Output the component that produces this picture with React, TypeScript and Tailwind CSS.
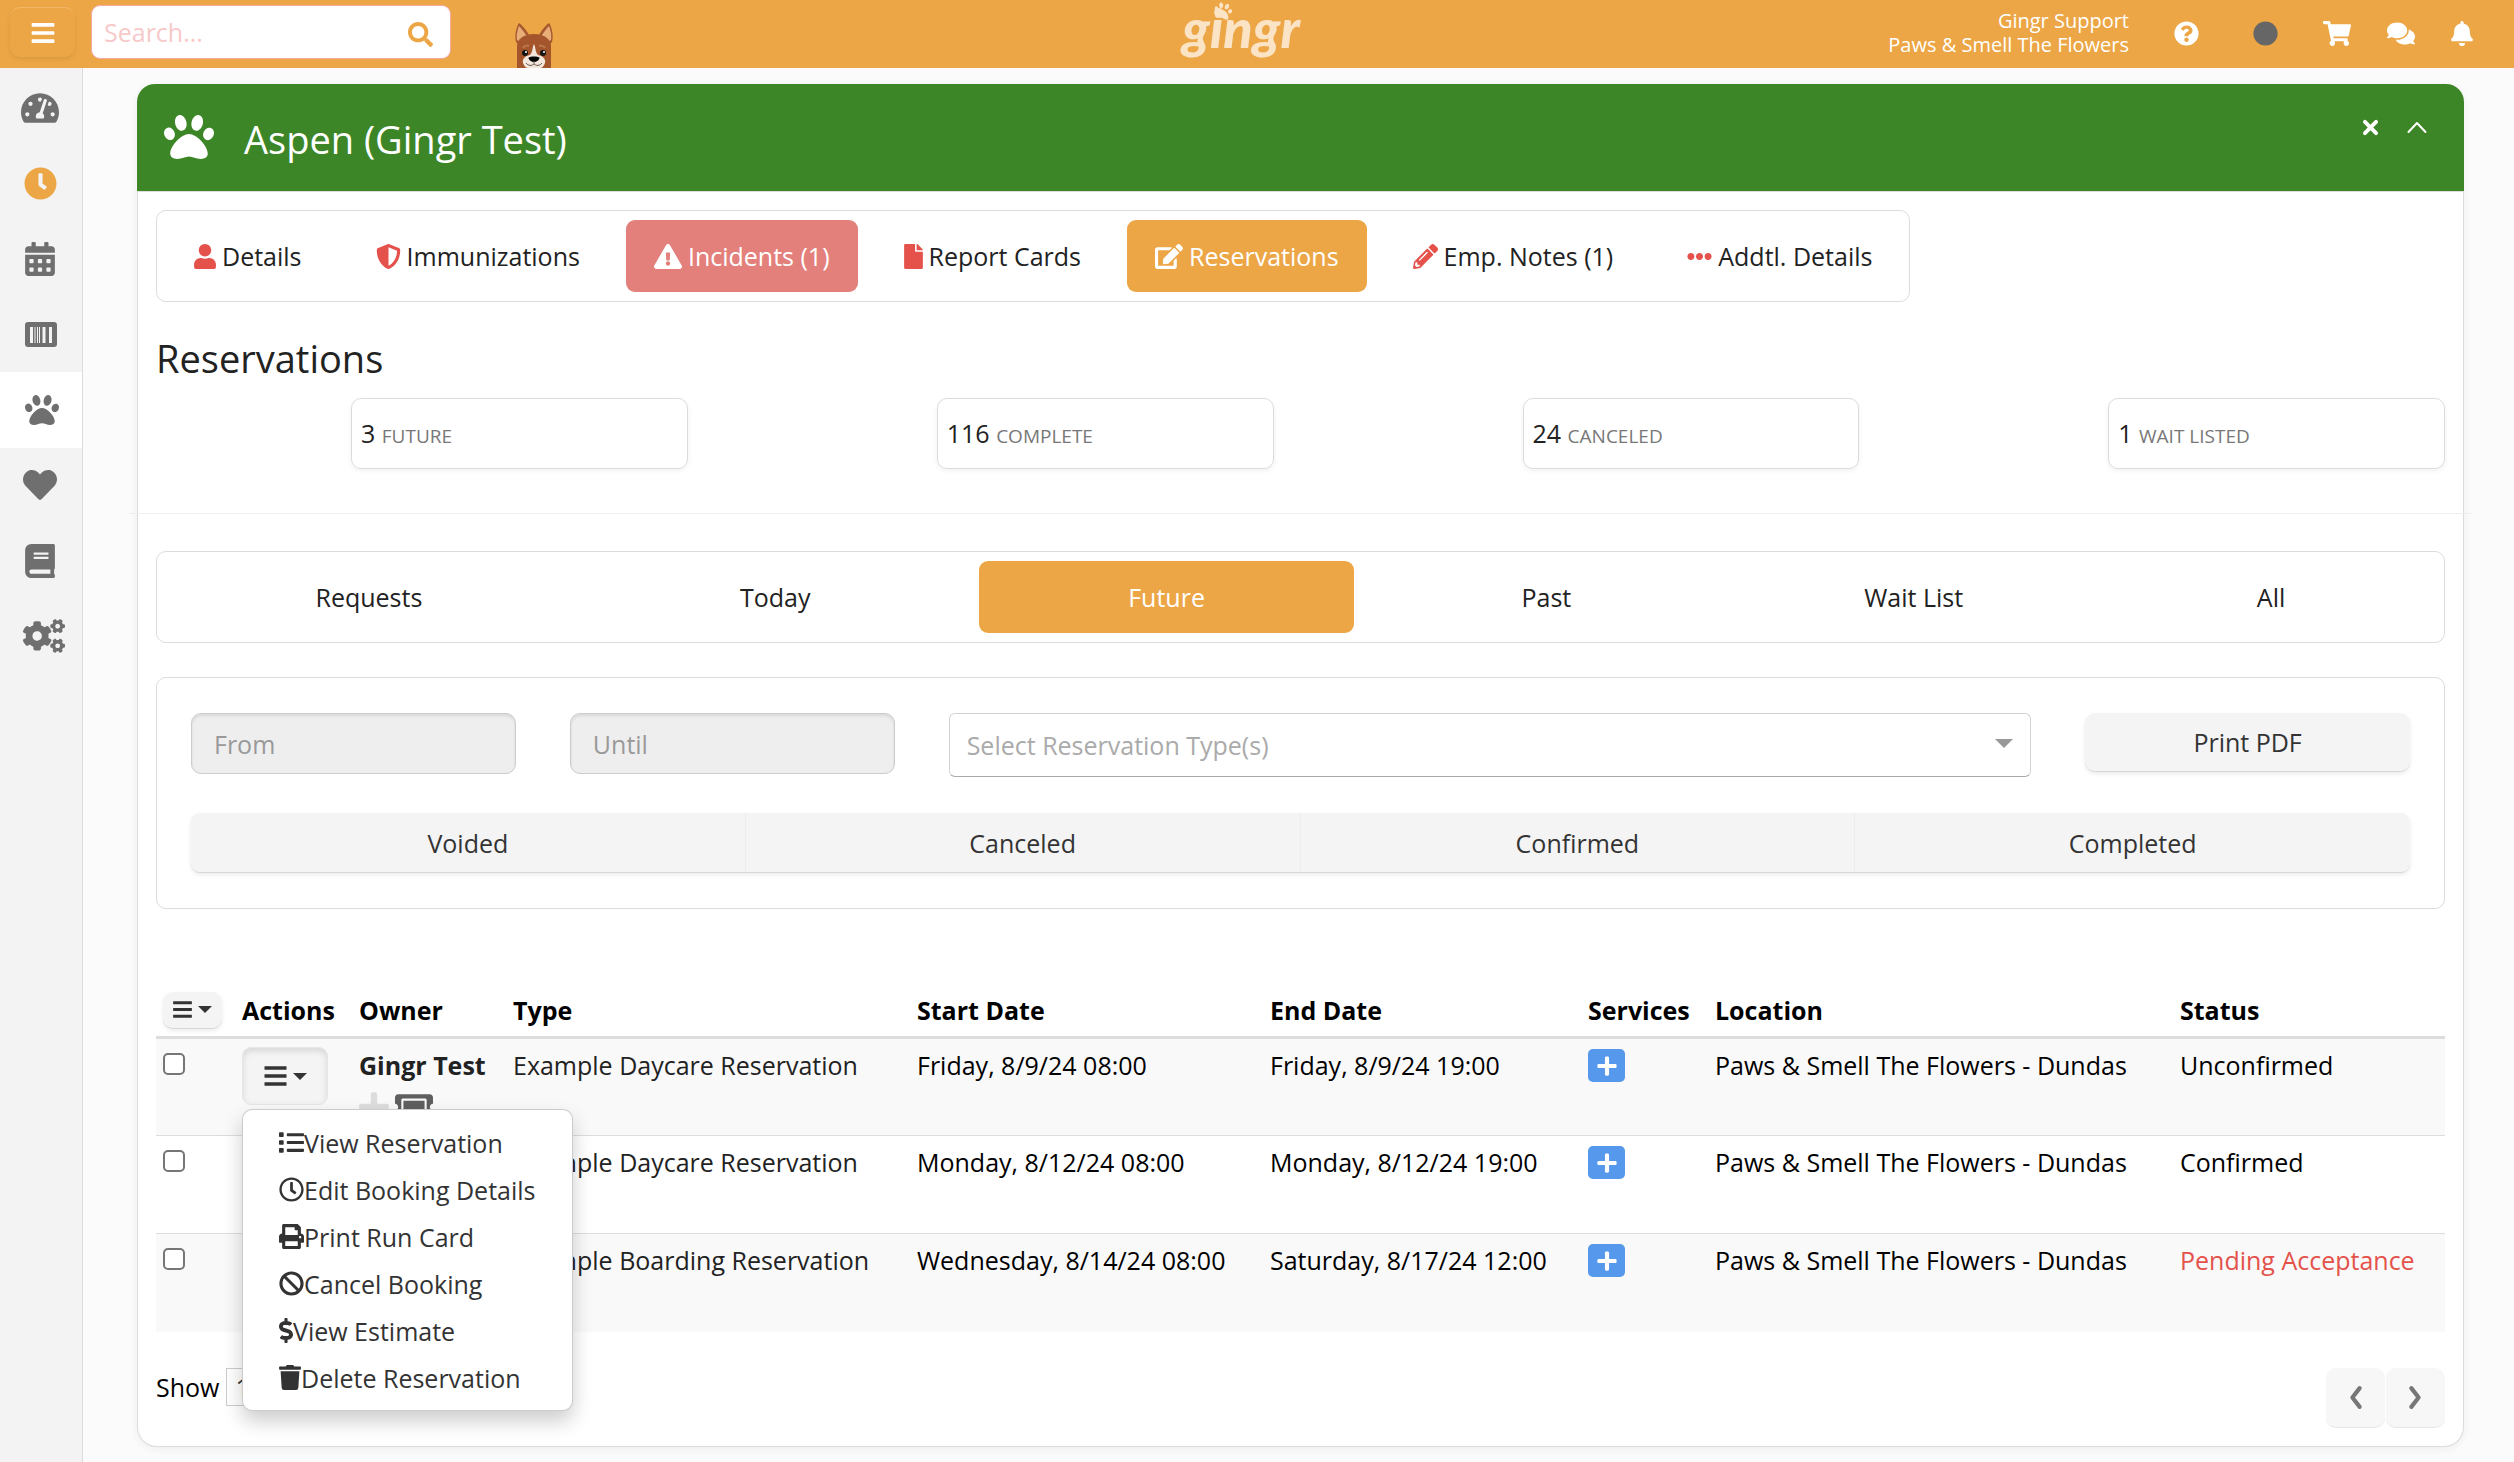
import type { ReactNode } from "react";
import {
  FaBan,
  FaBars,
  FaBell,
  FaBook,
  FaCalendarAlt,
  FaCircle,
  FaClock,
  FaCogs,
  FaComments,
  FaDollarSign,
  FaEdit,
  FaEllipsisH,
  FaExclamationTriangle,
  FaFile,
  FaHeart,
  FaList,
  FaPaw,
  FaPencilAlt,
  FaPlus,
  FaPrint,
  FaQuestionCircle,
  FaRegClock,
  FaSearch,
  FaShieldAlt,
  FaShoppingCart,
  FaTachometerAlt,
  FaTicketAlt,
  FaTrash,
  FaUser,
} from "react-icons/fa";

function Dog() {
  return (
    <svg viewBox="0 0 40 46" className="h-[46px] w-10" aria-hidden="true">
      <path d="M2 20C0 12 3 4 5 1c4 3 9 9 11 14L6 24z" fill="#a6582f" />
      <path d="M38 20c2-8-1-16-3-19-4 3-9 9-11 14l10 9z" fill="#a6582f" />
      <path d="M3 18C2 12 4 7 5 4c3 3 6 7 8 11l-5 6z" fill="#e9ae78" />
      <path d="M37 18c1-6-1-11-2-14-3 3-6 7-8 11l5 6z" fill="#e9ae78" />
      <path d="M6 19c1-3 3-5 5-5l-2 7zM34 19c-1-3-3-5-5-5l2 7z" fill="#a08662" />
      <path d="M3 46V24c0-7 7-12 17-12s17 5 17 12v22z" fill="#a4552c" />
      <path d="M20 22c-2 4-1 8-4 11-5 1-8 4-7 8 1 3 3 5 5 5h12c2 0 4-2 5-5 1-4-2-7-7-8-3-3-2-7-4-11z" fill="#f3e7dd" />
      <path d="M9 26c1-2 4-3 6-2M31 26c-1-2-4-3-6-2" stroke="#b9794f" strokeWidth="2" fill="none" />
      <circle cx="11" cy="31" r="3" fill="#141414" />
      <circle cx="29" cy="31" r="3" fill="#141414" />
      <circle cx="12" cy="30" r="1" fill="#fff" />
      <circle cx="30" cy="30" r="1" fill="#fff" />
      <path d="M14.500 35.500c2-1.500 9-1.500 11 0 0 2.500-3 4.500-5.500 4.500s-5.500-2-5.500-4.500z" fill="#050505" />
      <path d="M20 39v3M12 41c2 3 6 3 8 1 2 2 6 2 8-1" stroke="#6b5a52" strokeWidth="1" fill="none" />
    </svg>
  );
}

function Barcode() {
  return (
    <svg viewBox="0 0 32 25" className="h-[25px] w-8" aria-hidden="true">
      <path
        fill="currentColor"
        fillRule="evenodd"
        d="M3 0h26a3 3 0 0 1 3 3v19a3 3 0 0 1-3 3H3a3 3 0 0 1-3-3V3a3 3 0 0 1 3-3zM5 5v16h3V5zM9.500 5v16h1V5zM12 5v16h1V5zM14 5v16h1V5zM17.500 5v16h3V5zM24 5v16h3V5z"
      />
    </svg>
  );
}

function Caret({ className }: { className: string }) {
  return (
    <svg viewBox="0 0 14 7" className={className} aria-hidden="true">
      <path d="M0 0h14L7 7z" fill="currentColor" />
    </svg>
  );
}

function Lines({ className }: { className: string }) {
  return (
    <svg viewBox="0 0 22 20" className={className} aria-hidden="true">
      <path d="M0 2h22M0 10h22M0 18h22" stroke="currentColor" strokeWidth="3.500" />
    </svg>
  );
}

function Chevron({ d, className }: { d: string; className: string }) {
  return (
    <svg viewBox="0 0 24 24" className={className} aria-hidden="true">
      <path d={d} stroke="currentColor" fill="none" strokeLinecap="round" strokeLinejoin="round" />
    </svg>
  );
}

const sideLinks: { label: string; icon: ReactNode; className: string }[] = [
  { label: "Dashboard", icon: <FaTachometerAlt className="size-[38px]" />, className: "pl-[21px] text-[#6f6f6f]" },
  { label: "Time clock", icon: <FaClock className="size-[33px]" />, className: "pl-6 text-[#eca646]" },
  { label: "Calendar", icon: <FaCalendarAlt className="h-[34px] w-[30px]" />, className: "pl-[25px] text-[#6f6f6f]" },
  { label: "Point of sale", icon: <Barcode />, className: "pl-[25px] text-[#6f6f6f]" },
  { label: "Animals", icon: <FaPaw className="size-[34px]" />, className: "bg-white pl-[25px] text-[#6f6f6f]" },
  { label: "Owners", icon: <FaHeart className="size-[34px]" />, className: "pl-[23px] text-[#6f6f6f]" },
  { label: "Reports", icon: <FaBook className="h-[34px] w-[30px]" />, className: "pl-[25px] text-[#6f6f6f]" },
  { label: "Settings", icon: <FaCogs className="h-[34px] w-[42px]" />, className: "pl-[23px] text-[#6f6f6f]" },
];

const tabs: { label: string; icon: ReactNode; className: string }[] = [
  { label: "Details", icon: <FaUser className="h-[25px] w-[22px] text-[#e4524b]" />, className: "text-[#222]" },
  { label: "Immunizations", icon: <FaShieldAlt className="size-[25px] text-[#e4524b]" />, className: "text-[#222]" },
  {
    label: "Incidents (1)",
    icon: <FaExclamationTriangle className="h-[25px] w-7 text-white" />,
    className: "bg-[#e3807b] text-white",
  },
  { label: "Report Cards", icon: <FaFile className="h-[25px] w-[19px] text-[#e4524b]" />, className: "text-[#222]" },
  { label: "Reservations", icon: <FaEdit className="h-[25px] w-7 text-white" />, className: "bg-[#eca646] text-white" },
  { label: "Emp. Notes (1)", icon: <FaPencilAlt className="size-[25px] text-[#e4524b]" />, className: "text-[#222]" },
  { label: "Addtl. Details", icon: <FaEllipsisH className="size-[25px] text-[#e4524b]" />, className: "text-[#222]" },
];

const stats = [
  ["3", "FUTURE"],
  ["116", "COMPLETE"],
  ["24", "CANCELED"],
  ["1", "WAIT LISTED"],
];

const periods = ["Requests", "Today", "Future", "Past", "Wait List", "All"];
const states = ["Voided", "Canceled", "Confirmed", "Completed"];

const menu: { label: string; icon: ReactNode }[] = [
  { label: "View Reservation", icon: <FaList className="size-[25px]" /> },
  { label: "Edit Booking Details", icon: <FaRegClock className="size-[25px]" /> },
  { label: "Print Run Card", icon: <FaPrint className="size-[25px]" /> },
  { label: "Cancel Booking", icon: <FaBan className="size-[25px]" /> },
  { label: "View Estimate", icon: <FaDollarSign className="h-[25px] w-[14px]" /> },
  { label: "Delete Reservation", icon: <FaTrash className="h-[25px] w-[22px]" /> },
];

const rows = [
  { owner: "Gingr Test", type: "Example Daycare Reservation", start: "Friday, 8/9/24 08:00", end: "Friday, 8/9/24 19:00", status: "Unconfirmed" },
  { owner: "", type: "Example Daycare Reservation", start: "Monday, 8/12/24 08:00", end: "Monday, 8/12/24 19:00", status: "Confirmed" },
  { owner: "", type: "Example Boarding Reservation", start: "Wednesday, 8/14/24 08:00", end: "Saturday, 8/17/24 12:00", status: "Pending Acceptance" },
];

const raised = "border-b border-[#d8d8d8] bg-[#f4f4f4] shadow-[0_2px_4px_rgba(0,0,0,0.08)]";

function TopBar() {
  return (
    <header className="grid h-[68px] grid-cols-[1fr_auto_1fr] bg-[#eca646] text-white">
      <div className="flex items-start pl-[10px]">
        <button
          type="button"
          aria-label="Toggle menu"
          className="mt-[7px] flex h-[50px] w-[65px] items-center justify-center rounded-[10px] border-t border-[#f2b868] shadow-[0_2px_4px_rgba(0,0,0,0.08)]"
        >
          <FaBars className="size-[26px]" />
        </button>
        <div className="relative mt-[5px] ml-4">
          <input
            type="text"
            aria-label="Search"
            placeholder="Search..."
            className="h-[54px] w-[360px] rounded-[9px] border border-[#f4a9a5] bg-white pr-14 pl-3 text-[25px] leading-9 text-[#222] placeholder:text-[#f7c9c9]"
          />
          <button type="button" aria-label="Run search" className="absolute top-[17px] right-[18px] text-[#eca646]">
            <FaSearch className="size-[25px]" />
          </button>
        </div>
        <div className="mt-[22px] ml-[63px]">
          <Dog />
        </div>
      </div>
      <a href="#home" aria-label="gingr" className="relative mr-8 text-[#fbe3c6]">
        <span className="block font-['Lato'] text-[54px] leading-[56px] font-black italic">gingr</span>
        <FaPaw className="absolute top-0.5 left-8 size-[18px] rotate-12" />
      </a>
      <div className="flex items-center justify-end pr-[41px] pb-0.5">
        <div className="mr-[45px] text-right text-[20px] leading-6">
          <div>Gingr Support</div>
          <div>Paws &amp; Smell The Flowers</div>
        </div>
        <button type="button" aria-label="Help" className="mr-[54px]">
          <FaQuestionCircle className="size-[25px]" />
        </button>
        <button type="button" aria-label="Status" className="mr-[45px] text-[#666]">
          <FaCircle className="size-[25px]" />
        </button>
        <button type="button" aria-label="Cart" className="mr-9">
          <FaShoppingCart className="h-[25px] w-7" />
        </button>
        <button type="button" aria-label="Messages" className="mr-9">
          <FaComments className="h-[25px] w-7" />
        </button>
        <button type="button" aria-label="Notifications">
          <FaBell className="h-[25px] w-[22px]" />
        </button>
      </div>
    </header>
  );
}

function ActionMenu() {
  return (
    <ul className="absolute top-full left-0 z-10 mt-1 w-max rounded-[10px] border border-black/20 bg-white py-[9px] shadow-[0_10px_20px_rgba(0,0,0,0.2)]">
      {menu.map((m) => (
        <li key={m.label}>
          <a href="#action" className="flex h-[47px] items-center px-9 text-[#333]">
            {m.icon}
            <span>{m.label}</span>
          </a>
        </li>
      ))}
    </ul>
  );
}

function ReservationTable() {
  return (
    <table className="mt-[75px] w-full table-fixed text-left text-black">
      <colgroup>
        <col className="w-[79px]" />
        <col className="w-[117px]" />
        <col className="w-[154px]" />
        <col className="w-[404px]" />
        <col className="w-[353px]" />
        <col className="w-[318px]" />
        <col className="w-[127px]" />
        <col className="w-[465px]" />
        <col className="w-[272px]" />
      </colgroup>
      <thead>
        <tr className="border-b-[3px] border-[#ddd]">
          <th className="px-[7px]">
            <button
              type="button"
              aria-label="Bulk actions"
              className={`flex h-[37px] w-[59px] items-center justify-center gap-1.5 rounded-[10px] text-[#333] ${raised}`}
            >
              <Lines className="h-[17px] w-[19px]" />
              <Caret className="h-[7px] w-[14px]" />
            </button>
          </th>
          {["Actions", "Owner", "Type", "Start Date", "End Date", "Services", "Location", "Status"].map((h) => (
            <th key={h} className="px-[7px] py-2 font-bold whitespace-nowrap">
              {h}
            </th>
          ))}
        </tr>
      </thead>
      <tbody>
        {rows.map((r, i) => (
          <tr key={r.start} className="h-[98px] border-t border-[#ddd] align-top whitespace-nowrap odd:bg-[#f9f9f9]">
            <td className="px-[7px] py-[14px]">
              <input
                type="checkbox"
                aria-label={`Select reservation ${r.start}`}
                className="block size-[22px] appearance-none rounded-[5px] border-2 border-[#767676] bg-white"
              />
            </td>
            <td className="px-[7px] py-2">
              <div className="relative">
                <button
                  type="button"
                  aria-label="Reservation actions"
                  className="flex h-[58px] w-[86px] items-center justify-center gap-1.5 rounded-[9px] border border-[#e6e6e6] bg-[#f4f4f4] text-[#333] shadow-[inset_0_3px_6px_rgba(0,0,0,0.12)]"
                >
                  <Lines className="h-5 w-[23px]" />
                  <Caret className="h-[7px] w-[14px]" />
                </button>
                {i === 0 && <ActionMenu />}
              </div>
            </td>
            <td className="px-[7px] py-2">
              {r.owner && (
                <>
                  <a href="#owner" className="font-bold text-[#222]">
                    {r.owner}
                  </a>
                  <div className="mt-[7px] flex items-start gap-1.5">
                    <FaPlus className="h-[34px] w-[30px] text-[#ddd]" />
                    <FaTicketAlt className="h-[34px] w-[38px] text-[#5f5f5f]" />
                  </div>
                </>
              )}
            </td>
            <td className="px-[7px] py-2">
              <a href="#type" className="text-[#222]">
                {r.type}
              </a>
            </td>
            <td className="px-[7px] py-2">{r.start}</td>
            <td className="px-[7px] py-2">{r.end}</td>
            <td className="px-[7px] py-[10px]">
              <button
                type="button"
                aria-label="Add service"
                className="flex h-[33px] w-[37px] items-center justify-center rounded-[5px] bg-[#5598ec] text-white"
              >
                <FaPlus className="size-[22px]" />
              </button>
            </td>
            <td className="px-[7px] py-2">Paws &amp; Smell The Flowers - Dundas</td>
            <td className={i === 2 ? "px-[7px] py-2 text-[#e4524b]" : "px-[7px] py-2"}>{r.status}</td>
          </tr>
        ))}
      </tbody>
    </table>
  );
}

export default function App() {
  return (
    <div className="flex min-h-screen flex-col bg-[#fbfbfb] font-['Open_Sans',sans-serif] text-[25px] leading-9 text-[#222]">
      <TopBar />
      <div className="flex flex-1">
        <nav aria-label="Main" className="w-[83px] shrink-0 border-r border-[#dcdcdc] bg-[#f3f3f3] pt-0.5">
          <ul className="grid h-[604px] grid-rows-8">
            {sideLinks.map((s) => (
              <li key={s.label} className="flex">
                <a href="#section" aria-label={s.label} className={`flex flex-1 items-center ${s.className}`}>
                  {s.icon}
                </a>
              </li>
            ))}
          </ul>
        </nav>
        <main className="min-w-0 flex-1 pt-4 pr-[50px] pb-[15px] pl-[54px]">
          <section className="rounded-[20px] border border-t-0 border-[#dcdcdc] bg-white shadow-[0_2px_8px_rgba(0,0,0,0.06)]">
            <div className="-mx-px flex h-[107px] items-start rounded-t-[18px] bg-[#3d8628] px-[27px] text-white">
              <FaPaw className="mt-7 size-[50px]" />
              <h1 className="mt-[29px] ml-[30px] flex-1 text-[38px] leading-[52px]">Aspen (Gingr Test)</h1>
              <button type="button" aria-label="Close" className="mt-[34px] mr-[25px]">
                <Chevron d="M5 5l14 14M19 5L5 19" className="size-[19px] stroke-[5]" />
              </button>
              <button type="button" aria-label="Collapse" className="mt-[31px] mr-2">
                <Chevron d="M3.500 17L12 8l8.500 9" className="size-6 stroke-[2]" />
              </button>
            </div>
            <div className="border-t border-[#dcdcdc] px-[18px] pt-[18px] pb-[18px]">
              <div className="flex w-max gap-[18px] rounded-[10px] border border-[#dcdcdc] p-[9px]">
                {tabs.map((t) => (
                  <button
                    key={t.label}
                    type="button"
                    className={`flex h-[72px] items-center gap-1.5 rounded-[9px] px-7 whitespace-nowrap ${t.className}`}
                  >
                    {t.icon}
                    {t.label}
                  </button>
                ))}
              </div>

              <h2 className="mt-[30px] text-[38px] leading-[52px]">Reservations</h2>

              <div className="mt-[14px] grid grid-cols-4 gap-[54px]">
                {stats.map(([n, label]) => (
                  <div key={label} className="pl-[195px]">
                    <div className="flex h-[71px] items-center rounded-[10px] border border-[#dcdcdc] px-[9px] pt-0.5 shadow-[0_2px_5px_rgba(0,0,0,0.06)]">
                      <p>
                        {n} <small className="text-[19px] text-[#777]">{label}</small>
                      </p>
                    </div>
                  </div>
                ))}
              </div>

              <hr className="-mx-[27px] mt-11 mb-[37px] border-[#eee]" />

              <div className="grid grid-cols-[406fr_371fr_376fr_348fr_351fr_328fr] gap-[18px] rounded-[10px] border border-[#dcdcdc] p-[9px]">
                {periods.map((p) => (
                  <button
                    key={p}
                    type="button"
                    className={p === "Future" ? "h-[72px] rounded-[9px] bg-[#eca646] text-white" : "h-[72px] rounded-[9px]"}
                  >
                    {p}
                  </button>
                ))}
              </div>

              <div className="mt-[34px] rounded-[10px] border border-[#dcdcdc] px-[34px] py-[35px]">
                <div className="grid grid-cols-12 items-start gap-[54px]">
                  {["From", "Until"].map((f) => (
                    <input
                      key={f}
                      type="text"
                      aria-label={f}
                      placeholder={f}
                      readOnly
                      className="col-span-2 h-[61px] min-w-0 rounded-[10px] border border-[#ccc] bg-[#eee] px-[22px] shadow-[inset_0_2px_3px_rgba(0,0,0,0.09)] placeholder:text-[#999]"
                    />
                  ))}
                  <div className="relative col-span-6">
                    <select
                      aria-label="Reservation types"
                      className="block h-16 w-full appearance-none rounded-[6px] border border-[#d3d3d3] border-b-[#aaa] bg-white px-[17px] text-[#aaa]"
                    >
                      <option>Select Reservation Type(s)</option>
                    </select>
                    <Caret className="pointer-events-none absolute top-[26px] right-[18px] h-[9px] w-[18px] text-[#999]" />
                  </div>
                  <button type="button" className={`col-span-2 h-[59px] rounded-[10px] text-[#333] ${raised}`}>
                    Print PDF
                  </button>
                </div>
                <div className={`mt-9 grid h-[60px] grid-cols-4 divide-x divide-[#ededed] rounded-[9px] text-[#333] ${raised}`}>
                  {states.map((s) => (
                    <button key={s} type="button">
                      {s}
                    </button>
                  ))}
                </div>
              </div>

              <ReservationTable />

              <div className="mt-9 flex items-start justify-between text-black">
                <label className="flex items-center gap-[7px]">
                  Show
                  <select className="h-[38px] w-16 appearance-none border border-[#ccc] bg-white px-2 text-[#333]">
                    <option>10</option>
                  </select>
                </label>
                <div className="flex gap-px text-[#777]">
                  <button type="button" aria-label="Previous page" className="flex h-[60px] w-[59px] items-center justify-center rounded-[10px] border-b border-[#e6e6e6] bg-[#f7f7f7]">
                    <Chevron d="M16 3L9 12l7 9" className="size-[25px] stroke-[4]" />
                  </button>
                  <button type="button" aria-label="Next page" className="flex h-[60px] w-[59px] items-center justify-center rounded-[10px] border-b border-[#e6e6e6] bg-[#f7f7f7]">
                    <Chevron d="M8 3l7 9-7 9" className="size-[25px] stroke-[4]" />
                  </button>
                </div>
              </div>
            </div>
          </section>
        </main>
      </div>
    </div>
  );
}
